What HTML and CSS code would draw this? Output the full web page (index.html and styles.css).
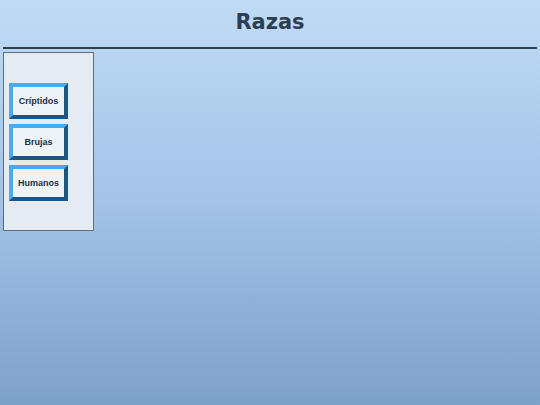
FILE: index.html
```html
<!DOCTYPE html>
<html lang="es">
<head>
<meta charset="utf-8">
<title>Razas</title>
<link rel="stylesheet" href="styles.css">
</head>
<body>
<header class="header">
  <h1 class="title">Razas</h1>
</header>
<div class="main">
  <nav class="sidebar">
    <button class="btn">Críptidos</button>
    <button class="btn">Brujas</button>
    <button class="btn">Humanos</button>
  </nav>
</div>
</body>
</html>
```

FILE: styles.css
```css
html, body {
  margin: 0;
  padding: 0;
  height: 100%;
}
body {
  background: linear-gradient(to bottom, #c0dbf5 0%, #a3c2e6 50%, #7ea1ca 100%);
  font-family: "DejaVu Sans", Verdana, sans-serif;
  color: #2c3e50;
}
.header {
  margin: 0 3px;
  border-bottom: 2px solid #2c3e50;
  height: 47px;
  display: flex;
  justify-content: center;
  align-items: center;
}
.title {
  margin: 0;
  font-size: 21px;
  font-weight: bold;
  color: #2c3e50;
  line-height: 1;
  padding-bottom: 3px;
}
.main {
  padding: 3px 3px;
}
.sidebar {
  background: #e5ebf3;
  border: 1px solid #5d6d7e;
  padding: 30px 0 0 5px;
  box-sizing: border-box;
  width: 91px;
  height: 179px;
  display: flex;
  flex-direction: column;
  gap: 5px;
  align-items: flex-start;
}
.btn {
  width: 59px;
  height: 36px;
  box-sizing: border-box;
  border-width: 4px;
  border-style: solid;
  border-color: #4aaaf0 #1e5585 #1e5585 #4aaaf0;
  background: #eef3f8;
  font-family: "Liberation Sans", Arial, sans-serif;
  font-weight: bold;
  font-size: 9px;
  color: #1f2f45;
  padding: 0;
  cursor: pointer;
}
```
